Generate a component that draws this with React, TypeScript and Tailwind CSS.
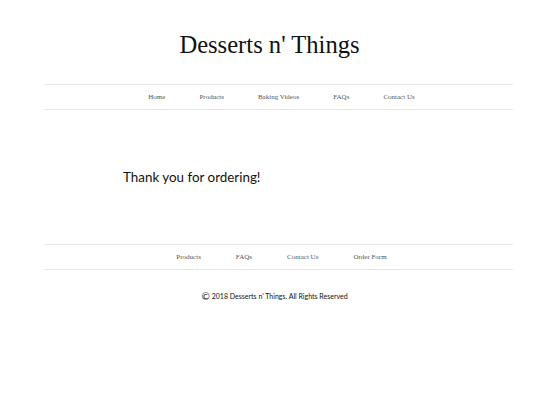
import React from "react";

export default function App() {
  const top = ["Home", "Products", "Baking Videos", "FAQs", "Contact Us"];
  const bottom = ["Products", "FAQs", "Contact Us", "Order Form"];
  return (
    <div className="w-[540px] h-[405px] bg-white overflow-hidden" style={{ fontFamily: '"Liberation Serif", serif' }}>
      <div className="h-[84px] flex justify-center pt-[30px] pr-[1px]">
        <h1 className="text-[24.6px] leading-[30px] text-[#111]" style={{ fontFamily: '"Liberation Serif", serif' }}>Desserts n' Things</h1>
      </div>
      <div className="ml-[44px] mr-[27px] h-[26px] border-y border-[#e8e8e8] flex items-center justify-center gap-[34px] pl-[6px]">
        {top.map((t) => (
          <span key={t} className="text-[7px] leading-none text-[#555]">{t}</span>
        ))}
      </div>
      <div className="h-[134px] pl-[123px] pt-[59px]">
        <p className="text-[13.4px] leading-[16px] text-[#111]" style={{ fontFamily: 'Lato, sans-serif' }}>Thank you for ordering!</p>
      </div>
      <div className="ml-[44px] mr-[27px] h-[26px] border-y border-[#e8e8e8] flex items-center justify-center gap-[35px] pl-[6px]">
        {bottom.map((t) => (
          <span key={t} className="text-[7px] leading-none text-[#555]">{t}</span>
        ))}
      </div>
      <div className="flex justify-center pt-[21px] pl-[9px]">
        <span className="text-[7px] leading-[10px] text-[#111] flex items-center gap-[2px]" style={{ fontFamily: 'Lato, sans-serif' }}>
          <span className="text-[10px] leading-none">©</span> 2018 Desserts n' Things. All Rights Reserved
        </span>
      </div>
    </div>
  );
}
